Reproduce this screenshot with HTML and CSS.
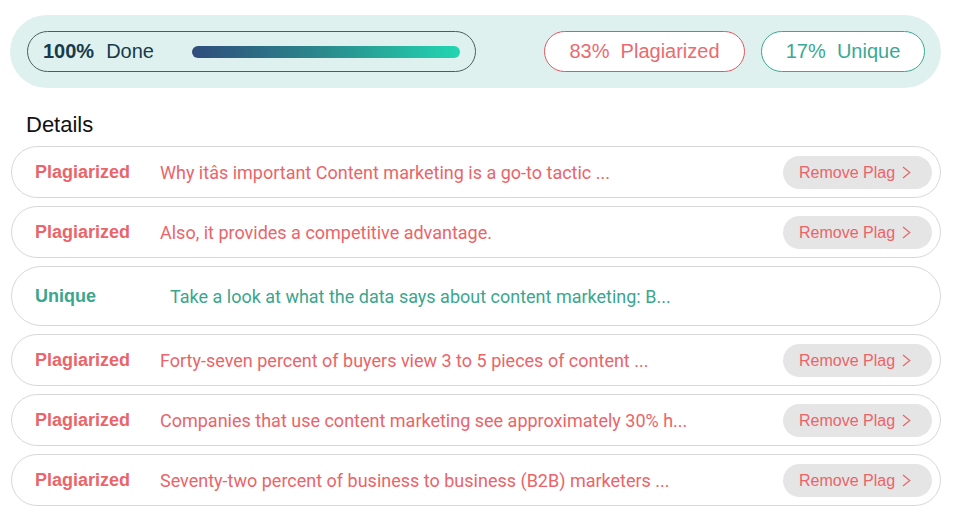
FILE: index.html
```html
<!DOCTYPE html>
<html>
<head>
<meta charset="utf-8">
<link rel="stylesheet" href="styles.css">
</head>
<body>
<div class="summary">
  <div class="done">
    <span class="done-pct">100%</span>
    <span class="done-label">Done</span>
    <div class="bar"></div>
  </div>
  <div class="spacer"></div>
  <div class="badge badge-plag">83%&nbsp; Plagiarized</div>
  <div class="badge badge-uniq">17%&nbsp; Unique</div>
</div>
<h2 class="heading">Details</h2>
<div class="rows">
  <div class="row plag">
    <span class="label">Plagiarized</span>
    <span class="text">Why itâs important Content marketing is a go-to tactic ...</span>
    <button class="remove">Remove Plag <svg class="chev" width="9" height="13" viewBox="0 0 9 13"><polyline points="1,1 7.8,6.5 1,12" fill="none" stroke="currentColor" stroke-width="1.2"/></svg></button>
  </div>
  <div class="row plag">
    <span class="label">Plagiarized</span>
    <span class="text">Also, it provides a competitive advantage.</span>
    <button class="remove">Remove Plag <svg class="chev" width="9" height="13" viewBox="0 0 9 13"><polyline points="1,1 7.8,6.5 1,12" fill="none" stroke="currentColor" stroke-width="1.2"/></svg></button>
  </div>
  <div class="row uniq">
    <span class="label">Unique</span>
    <span class="text">Take a look at what the data says about content marketing: B...</span>
  </div>
  <div class="row plag">
    <span class="label">Plagiarized</span>
    <span class="text">Forty-seven percent of buyers view 3 to 5 pieces of content ...</span>
    <button class="remove">Remove Plag <svg class="chev" width="9" height="13" viewBox="0 0 9 13"><polyline points="1,1 7.8,6.5 1,12" fill="none" stroke="currentColor" stroke-width="1.2"/></svg></button>
  </div>
  <div class="row plag">
    <span class="label">Plagiarized</span>
    <span class="text">Companies that use content marketing see approximately 30% h...</span>
    <button class="remove">Remove Plag <svg class="chev" width="9" height="13" viewBox="0 0 9 13"><polyline points="1,1 7.8,6.5 1,12" fill="none" stroke="currentColor" stroke-width="1.2"/></svg></button>
  </div>
  <div class="row plag">
    <span class="label">Plagiarized</span>
    <span class="text">Seventy-two percent of business to business (B2B) marketers ...</span>
    <button class="remove">Remove Plag <svg class="chev" width="9" height="13" viewBox="0 0 9 13"><polyline points="1,1 7.8,6.5 1,12" fill="none" stroke="currentColor" stroke-width="1.2"/></svg></button>
  </div>
</div>
</body>
</html>
```
FILE: styles.css
```css
* { box-sizing: border-box; }
body {
  margin: 0;
  padding: 15px 17px 0 10px;
  background: #ffffff;
  font-family: "Liberation Sans", Arial, sans-serif;
}
.summary {
  display: flex;
  align-items: center;
  width: 931px;
  height: 73px;
  padding: 0 16px 0 17px;
  background: #dff1ef;
  border-radius: 37px;
}
.done {
  display: flex;
  align-items: center;
  width: 449px;
  height: 41px;
  padding: 0 15px 0 15px;
  border: 1px solid #4b5d61;
  border-radius: 21px;
  color: #173a4c;
  font-size: 20px;
}
.done-pct { font-weight: bold; }
.done-label { margin-left: 12px; }
.bar {
  flex: 1;
  height: 12px;
  margin-left: 38px;
  border-radius: 6px;
  background: linear-gradient(90deg, #2f4d7c 0%, #2a8b8c 50%, #22d6b1 100%);
}
.spacer { flex: 1; }
.badge {
  height: 41px;
  display: flex;
  align-items: center;
  justify-content: center;
  border-radius: 21px;
  background: #ffffff;
  font-size: 20px;
}
.badge-plag {
  width: 201px;
  border: 1px solid #e0585e;
  color: #eb6a6f;
}
.badge-uniq {
  width: 164px;
  margin-left: 16px;
  border: 1px solid #3aa892;
  color: #3aa892;
}
.heading {
  margin: 0;
  height: 58px;
  padding: 24px 0 0 16px;
  font-size: 22px;
  font-weight: normal;
  line-height: 25px;
  color: #111111;
}
.rows {
  display: flex;
  flex-direction: column;
  gap: 8px;
  margin-left: 1px;
  width: 930px;
}
.row {
  display: flex;
  align-items: center;
  height: 52px;
  padding: 0 8px 0 23px;
  border: 1px solid #d8d8d8;
  border-radius: 27px;
  background: #ffffff;
}
.row.uniq { height: 60px; border-radius: 30px; }
.label {
  width: 125px;
  flex: none;
  font-weight: bold;
  font-size: 18px;
}
.text {
  flex: 1;
  font-family: Roboto, "Liberation Sans", sans-serif;
  font-size: 18px;
}
.plag .label, .plag .text { color: #eb6469; }
.uniq .label, .uniq .text { color: #3aa68e; }
.uniq .text { padding-left: 10px; }
.remove {
  display: flex;
  align-items: center;
  width: 149px;
  height: 33px;
  padding: 2px 0 0 16px;
  border: none;
  border-radius: 17px;
  background: #e5e5e5;
  color: #eb6469;
  font-family: "Liberation Sans", Arial, sans-serif;
  font-size: 16px;
}
.chev { margin-left: 7px; margin-top: -1px; }
```
